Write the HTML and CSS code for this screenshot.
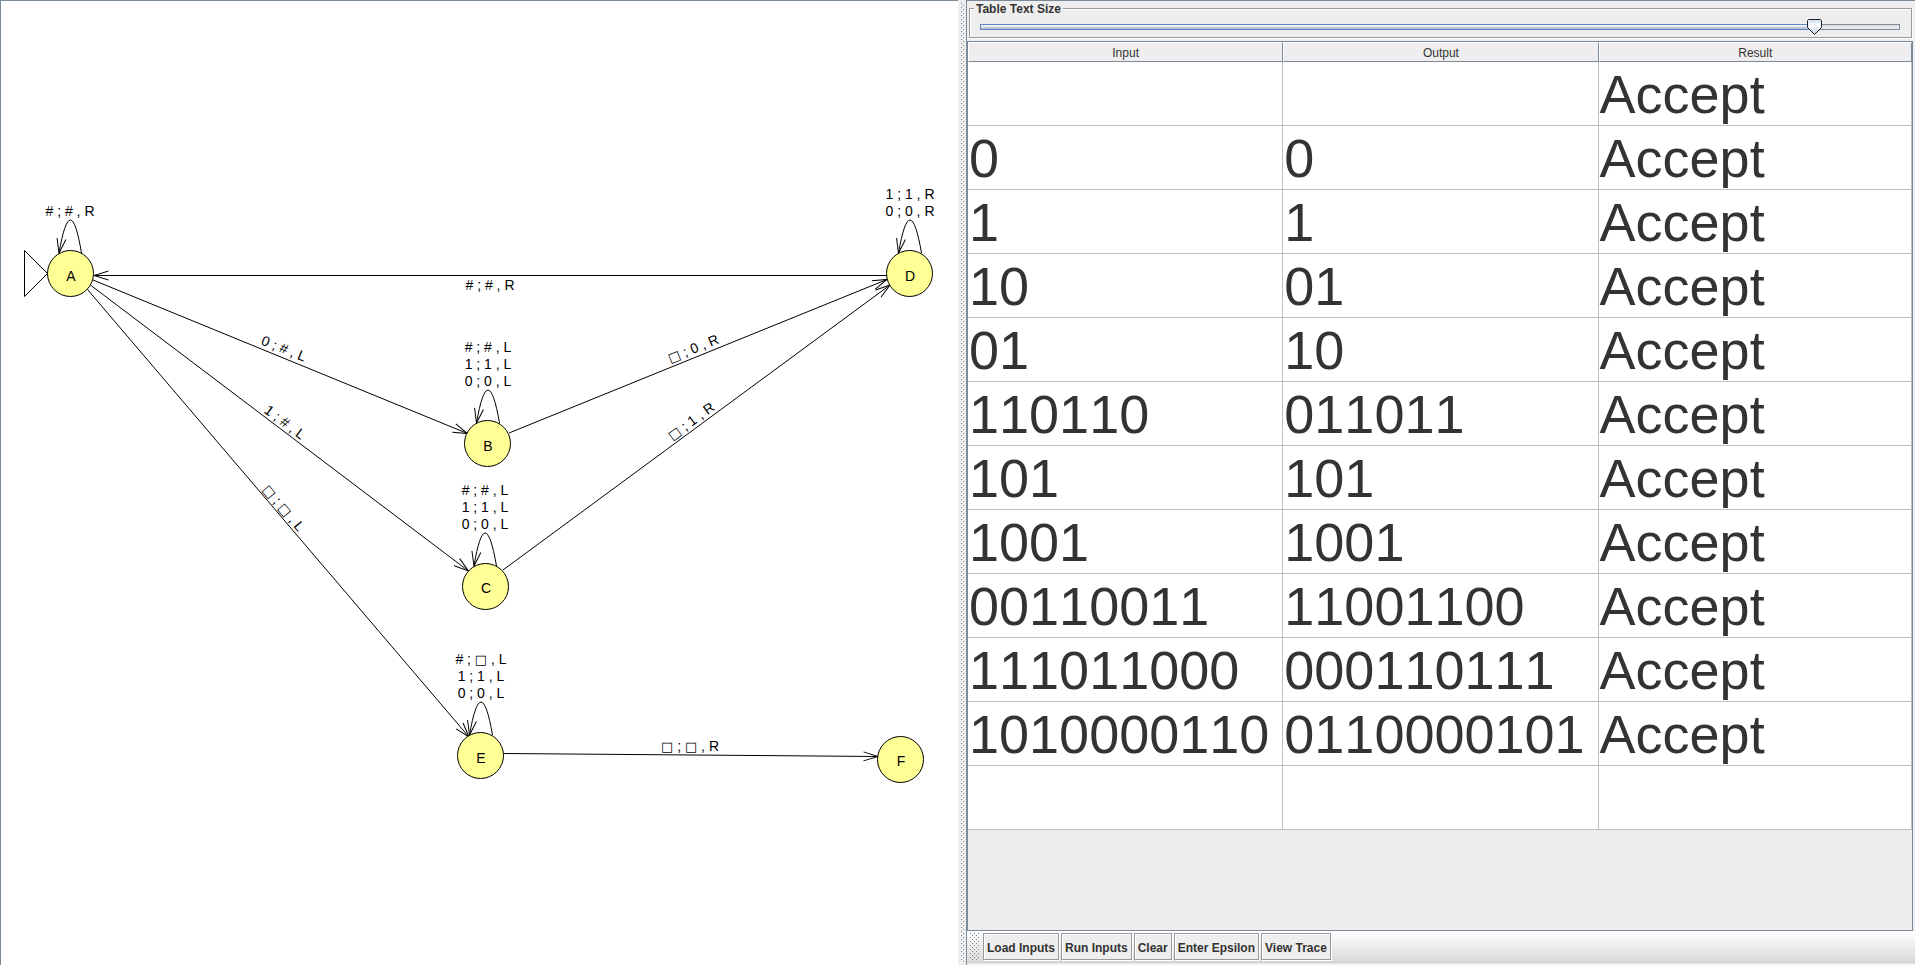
FILE: index.html
```html
<!DOCTYPE html>
<html lang="en">
<head>
<meta charset="utf-8">
<title>Turing machine – multiple run</title>
<link rel="stylesheet" href="styles.css">
</head>
<body>
<main class="split">
  <section class="canvas" aria-label="State diagram">
    <svg class="diagram" role="img" aria-label="Turing machine with states A to F">
      <defs>
        <marker id="arrow" markerUnits="userSpaceOnUse" markerWidth="20" markerHeight="14" refX="16" refY="6" orient="auto">
          <path class="edge" d="M1.500 1.500 L16 6 L1.500 10.500"/>
        </marker>
      </defs>

      <g class="edges">
        <path class="edge arrow" d="M887 275.500 H94"/>
        <path class="edge arrow" d="M93 280 L467.500 433.500"/>
        <path class="edge arrow" d="M91 285.500 L468.500 571"/>
        <path class="edge arrow" d="M87.500 289.500 L469 737"/>
        <path class="edge arrow" d="M509 433 L887 279.500"/>
        <path class="edge arrow" d="M503 570 L890 285"/>
        <path class="edge arrow" d="M504 753.500 L878 756.500"/>
        <path class="edge arrow" d="M81.500 253 Q70.500 187 59 253"/>
        <path class="edge arrow" d="M921.500 253 Q910 187 898.500 253"/>
        <path class="edge arrow" d="M499.500 423 Q488 357 476.500 423"/>
        <path class="edge arrow" d="M496.500 566 Q485 500 474 566"/>
        <path class="edge arrow" d="M492.500 735 Q481 669 469.500 735"/>
      </g>

      <path class="edge" d="M24.500 250.500 L47.500 273.500 L24.500 296.500 Z"/>
      <g class="states">
        <circle class="state" cx="70.500" cy="273.500" r="23"/><text x="71" y="281">A</text>
        <circle class="state" cx="487.500" cy="443.500" r="23"/><text x="488" y="451">B</text>
        <circle class="state" cx="485.500" cy="586.500" r="23"/><text x="486" y="593">C</text>
        <circle class="state" cx="909.500" cy="273.500" r="23"/><text x="910" y="281">D</text>
        <circle class="state" cx="480.500" cy="755.500" r="23"/><text x="481" y="763">E</text>
        <circle class="state" cx="900.500" cy="759.500" r="23"/><text x="901" y="766">F</text>
      </g>

      <g class="labels">
        <text x="70" y="216"># ; # , R</text>
        <text x="910" y="199">1 ; 1 , R</text>
        <text x="910" y="216">0 ; 0 , R</text>
        <text x="488" y="352"># ; # , L</text>
        <text x="488" y="369">1 ; 1 , L</text>
        <text x="488" y="386">0 ; 0 , L</text>
        <text x="485" y="495"># ; # , L</text>
        <text x="485" y="512">1 ; 1 , L</text>
        <text x="485" y="529">0 ; 0 , L</text>
        <text x="481" y="664"># ; <tspan class="blank">□</tspan> , L</text>
        <text x="481" y="681">1 ; 1 , L</text>
        <text x="481" y="698">0 ; 0 , L</text>
        <text x="490" y="290"># ; # , R</text>
        <text x="690" y="751"><tspan class="blank">□</tspan> ; <tspan class="blank">□</tspan> , R</text>
        <text transform="translate(282 353) rotate(22)">0 ; # , L</text>
        <text transform="translate(282 426) rotate(37)">1 ; # , L</text>
        <text transform="translate(280 511) rotate(50)"><tspan class="blank">□</tspan> ; <tspan class="blank">□</tspan> , L</text>
        <text transform="translate(695 353) rotate(-22)"><tspan class="blank">□</tspan> ; 0 , R</text>
        <text transform="translate(694 425) rotate(-36)"><tspan class="blank">□</tspan> ; 1 , R</text>
      </g>
    </svg>
  </section>

  <div class="divider" role="separator" aria-orientation="vertical"></div>

  <section class="panel">
    <fieldset class="size-box">
      <legend><label for="text-size">Table Text Size</label></legend>
      <input class="slider" id="text-size" type="range" min="0" max="100" step="0.5" value="91.5">
    </fieldset>

    <div class="scroll">
      <table class="runs">
        <thead>
          <tr><th scope="col">Input</th><th scope="col">Output</th><th scope="col">Result</th></tr>
        </thead>
        <tbody>
          <tr><td></td><td></td><td>Accept</td></tr>
          <tr><td>0</td><td>0</td><td>Accept</td></tr>
          <tr><td>1</td><td>1</td><td>Accept</td></tr>
          <tr><td>10</td><td>01</td><td>Accept</td></tr>
          <tr><td>01</td><td>10</td><td>Accept</td></tr>
          <tr><td>110110</td><td>011011</td><td>Accept</td></tr>
          <tr><td>101</td><td>101</td><td>Accept</td></tr>
          <tr><td>1001</td><td>1001</td><td>Accept</td></tr>
          <tr><td>00110011</td><td>11001100</td><td>Accept</td></tr>
          <tr><td>111011000</td><td>000110111</td><td>Accept</td></tr>
          <tr><td>1010000110</td><td>0110000101</td><td>Accept</td></tr>
          <tr><td></td><td></td><td></td></tr>
        </tbody>
      </table>
    </div>

    <div class="toolbar" role="toolbar" aria-label="Run controls">
      <span class="grip"></span>
      <button type="button">Load Inputs</button>
      <button type="button">Run Inputs</button>
      <button type="button">Clear</button>
      <button type="button">Enter Epsilon</button>
      <button type="button">View Trace</button>
    </div>
  </section>
</main>
</body>
</html>
```
FILE: styles.css
```css
:root {
  --line: #7a8a99;
  --face: #eeeeee;
  --grid: #c0c0c0;
  --text: #333333;
  --dot: conic-gradient(at 1px 1px, transparent 75%, var(--line) 0);
}

* {
  box-sizing: border-box;
}

body {
  margin: 0;
  background: var(--face);
  color: var(--text);
  font: 12px "Liberation Sans", Arial, sans-serif;
}

.split {
  display: grid;
  grid-template-columns: 958fr 8px 949fr;
  height: 100vh;
}

/* State diagram */
.canvas {
  min-width: 0;
  overflow: hidden;
  border: 1px solid var(--line);
  border-width: 1px 0 0 1px;
  background: #ffffff;
}

.diagram {
  display: block;
  width: 100%;
  height: 100%;
  margin: -1px 0 0 -1px;
  overflow: visible;
}

.diagram text {
  fill: #000000;
  font-size: 14px;
  font-kerning: none;
  text-anchor: middle;
}

.diagram .blank {
  font-family: "DejaVu Sans", sans-serif;
  font-size: 13px;
}

.edge {
  fill: none;
  stroke: #000000;
  stroke-width: 1px;
}

.arrow {
  marker-end: url(#arrow);
}

.state {
  fill: #ffff96;
  stroke: #000000;
  stroke-width: 1px;
}

/* Split handle */
.divider {
  padding: 3px 2px 3px 3px;
  cursor: col-resize;
}

.divider::before {
  content: "";
  display: block;
  height: 100%;
  background: var(--dot) 0 0 / 4px 4px, var(--dot) 2px 2px / 4px 4px;
}

/* Right-hand panel */
.panel {
  display: flex;
  flex-direction: column;
  min-width: 0;
  border: 1px solid var(--line);
  border-width: 1px 0 0 1px;
}

.size-box {
  min-width: 0;
  margin: 0 3px 3px 2px;
  padding: 3px 4px 2px;
  border: 1px solid #999999;
  box-shadow: 1px 1px 0 #ffffff, inset 1px 1px 0 #ffffff;
}

.size-box legend {
  padding: 2px 2px 0;
  background: var(--face);
  font-weight: bold;
  line-height: 13px;
}

.slider {
  appearance: none;
  display: block;
  width: calc(100% - 13px);
  height: 16px;
  margin: 0 6px;
  background: transparent;
}

.slider::-webkit-slider-runnable-track {
  height: 6px;
  border: 1px solid;
  border-image: linear-gradient(90deg, #6382bf 91%, var(--line) 91%) 1;
  background: linear-gradient(#ffffff, #a3b8cc) 0 0 / 91% 100% no-repeat, linear-gradient(#dddddd, #eeeeee);
}

.slider::-webkit-slider-thumb {
  appearance: none;
  width: 15px;
  height: 16px;
  margin-top: -6px;
  border: 0;
  background: url("data:image/svg+xml,%3Csvg xmlns='http://www.w3.org/2000/svg' width='15' height='16'%3E%3Cdefs%3E%3ClinearGradient id='g' x2='0' y2='1'%3E%3Cstop stop-color='%23c8ddf2'/%3E%3Cstop offset='.4' stop-color='%23fff'/%3E%3Cstop offset='1' stop-color='%23b8cfe5'/%3E%3C/linearGradient%3E%3C/defs%3E%3Cpath d='M1.500.500H13.500L14.500 1.500V8.500L7.500 15.500L.500 8.500V1.500Z' fill='url(%23g)' stroke='%23222'/%3E%3C/svg%3E") no-repeat;
}

.scroll {
  flex: 1;
  min-height: 0;
  margin-right: 2px;
  overflow: hidden;
  border: 1px solid var(--line);
}

.runs {
  width: 100%;
  border-collapse: separate;
  border-spacing: 0;
  table-layout: fixed;
}

.runs th {
  height: 20px;
  padding: 2px 0 0;
  border: 1px solid;
  border-color: #ffffff var(--line) var(--line) #ffffff;
  background: var(--face);
  font-weight: normal;
  line-height: 16px;
}

.runs th:not(:last-child) {
  width: 33.4%;
}

.runs td {
  height: 64px;
  padding: 2px 0 0 1px;
  border: 1px solid var(--grid);
  border-width: 0 1px 1px 0;
  background: #ffffff;
  font-size: 54px;
  font-kerning: none;
  line-height: 60px;
  vertical-align: top;
  white-space: nowrap;
}

/* Bottom toolbar */
.toolbar {
  display: flex;
  align-items: flex-start;
  gap: 2px;
  height: 32px;
  margin-bottom: 2px;
  padding: 2px 3px;
  border-bottom: 1px solid #cccccc;
  background: linear-gradient(#ffffff, #dadada);
}

.grip {
  width: 10px;
  height: 28px;
  margin-right: 1px;
  background: var(--dot) 0 0 / 4px 4px, var(--dot) 2px 2px / 4px 4px;
}

.toolbar button {
  height: 27px;
  padding: 2px 3px 0;
  border: 1px solid #999999;
  background: var(--face);
  box-shadow: 1px 1px 0 #ffffff, inset 1px 1px 0 #ffffff;
  color: var(--text);
  font: bold 12px "Liberation Sans", Arial, sans-serif;
}
```
